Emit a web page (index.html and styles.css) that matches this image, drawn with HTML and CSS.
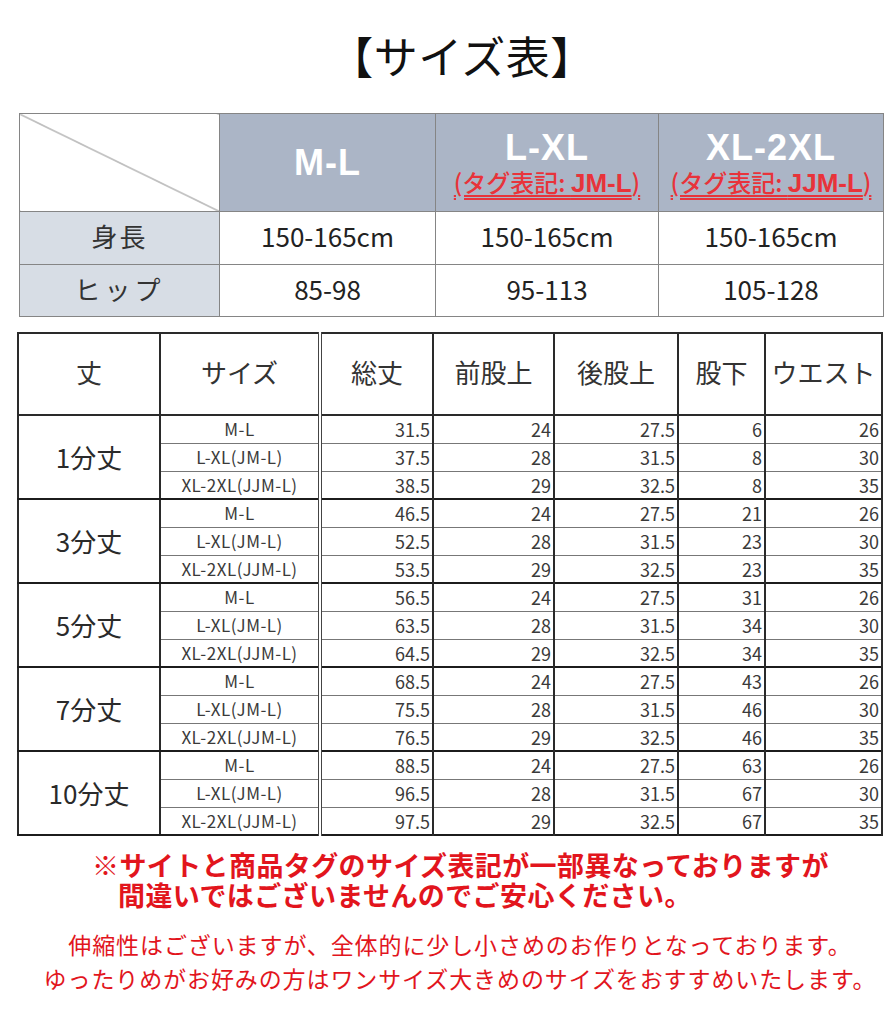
FILE: index.html
```html
<!DOCTYPE html>
<html lang="ja">
<head>
<meta charset="utf-8">
<link rel="stylesheet" href="styles.css">
</head>
<body>
<div class="page">
  <h1 class="title">【サイズ表】</h1>

  <table class="summary">
    <colgroup>
      <col class="c-label"><col class="c-a"><col class="c-b"><col class="c-c">
    </colgroup>
    <tr class="head">
      <td class="diag"></td>
      <th><span class="size-name">M-L</span></th>
      <th><span class="size-name">L-XL</span><span class="tag">(タグ表記: <b>JM-L</b>)</span></th>
      <th><span class="size-name">XL-2XL</span><span class="tag">(タグ表記: <b>JJM-L</b>)</span></th>
    </tr>
    <tr class="row-a">
      <th class="label">身長</th><td>150-165cm</td><td>150-165cm</td><td>150-165cm</td>
    </tr>
    <tr class="row-b">
      <th class="label label-wide">ヒップ</th><td>85-98</td><td>95-113</td><td>105-128</td>
    </tr>
  </table>

  <table class="detail">
    <colgroup>
      <col class="d1"><col class="d2"><col class="d3"><col class="d4"><col class="d5"><col class="d6"><col class="d7">
    </colgroup>
    <tr class="dhead">
      <th>丈</th><th class="sz-col">サイズ</th><th>総丈</th><th>前股上</th><th>後股上</th><th>股下</th><th>ウエスト</th>
    </tr>

    <tr class="gfirst"><td rowspan="3" class="len">1分丈</td><td class="sz">M-L</td><td>31.5</td><td>24</td><td>27.5</td><td>6</td><td>26</td></tr>
    <tr><td class="sz">L-XL(JM-L)</td><td>37.5</td><td>28</td><td>31.5</td><td>8</td><td>30</td></tr>
    <tr><td class="sz">XL-2XL(JJM-L)</td><td>38.5</td><td>29</td><td>32.5</td><td>8</td><td>35</td></tr>

    <tr class="gfirst"><td rowspan="3" class="len">3分丈</td><td class="sz">M-L</td><td>46.5</td><td>24</td><td>27.5</td><td>21</td><td>26</td></tr>
    <tr><td class="sz">L-XL(JM-L)</td><td>52.5</td><td>28</td><td>31.5</td><td>23</td><td>30</td></tr>
    <tr><td class="sz">XL-2XL(JJM-L)</td><td>53.5</td><td>29</td><td>32.5</td><td>23</td><td>35</td></tr>

    <tr class="gfirst"><td rowspan="3" class="len">5分丈</td><td class="sz">M-L</td><td>56.5</td><td>24</td><td>27.5</td><td>31</td><td>26</td></tr>
    <tr><td class="sz">L-XL(JM-L)</td><td>63.5</td><td>28</td><td>31.5</td><td>34</td><td>30</td></tr>
    <tr><td class="sz">XL-2XL(JJM-L)</td><td>64.5</td><td>29</td><td>32.5</td><td>34</td><td>35</td></tr>

    <tr class="gfirst"><td rowspan="3" class="len">7分丈</td><td class="sz">M-L</td><td>68.5</td><td>24</td><td>27.5</td><td>43</td><td>26</td></tr>
    <tr><td class="sz">L-XL(JM-L)</td><td>75.5</td><td>28</td><td>31.5</td><td>46</td><td>30</td></tr>
    <tr><td class="sz">XL-2XL(JJM-L)</td><td>76.5</td><td>29</td><td>32.5</td><td>46</td><td>35</td></tr>

    <tr class="gfirst"><td rowspan="3" class="len">10分丈</td><td class="sz">M-L</td><td>88.5</td><td>24</td><td>27.5</td><td>63</td><td>26</td></tr>
    <tr><td class="sz">L-XL(JM-L)</td><td>96.5</td><td>28</td><td>31.5</td><td>67</td><td>30</td></tr>
    <tr><td class="sz">XL-2XL(JJM-L)</td><td>97.5</td><td>29</td><td>32.5</td><td>67</td><td>35</td></tr>
  </table>

  <div class="notice-strong">
    <p>※サイトと商品タグのサイズ表記が一部異なっておりますが</p>
    <p class="indent">間違いではございませんのでご安心ください。</p>
  </div>
  <div class="notice">
    <p>伸縮性はございますが、全体的に少し小さめのお作りとなっております。</p>
    <p>ゆったりめがお好みの方はワンサイズ大きめのサイズをおすすめいたします。</p>
  </div>
</div>
</body>
</html>
```

FILE: styles.css
```css
html, body {
  margin: 0;
  padding: 0;
  background: #ffffff;
}

body {
  font-family: "Noto Sans CJK JP", "Liberation Sans", sans-serif;
  color: #2a2a2a;
}

.page {
  width: 896px;
  height: 1024px;
  overflow: hidden;
  display: flex;
  flex-direction: column;
  align-items: flex-start;
}

.title {
  align-self: center;
  margin: 30px 0 32px 28px;
  font-size: 44px;
  line-height: 51px;
  font-weight: 400;
  color: #111;
  letter-spacing: 0.5px;
}

/* ---------- summary table ---------- */
.summary {
  margin-left: 19px;
  border-collapse: collapse;
  table-layout: fixed;
  width: 864px;
}
.summary .c-label { width: 200px; }
.summary .c-a { width: 216px; }
.summary .c-b { width: 223px; }
.summary .c-c { width: 225px; }

.summary td,
.summary th {
  border: 1px solid #858585;
  padding: 0;
  text-align: center;
  vertical-align: middle;
}

.summary .head th,
.summary .head td {
  height: 97px;
}
.summary .head th {
  background: #abb5c6;
  color: #ffffff;
  font-family: "Liberation Sans", "Noto Sans CJK JP", sans-serif;
  font-weight: 700;
}
.summary .diag {
  background: linear-gradient(to top right, transparent calc(50% - 0.8px), #777 50%, transparent calc(50% + 0.8px));
}
.summary .size-name {
  display: block;
  font-size: 36px;
  line-height: 38px;
  letter-spacing: 1px;
}
.summary .tag {
  display: inline-block;
  margin-top: 1px;
  font-family: "Noto Sans CJK JP", sans-serif;
  font-weight: 500;
  font-size: 24px;
  line-height: 28px;
  color: #e8333a;
  text-decoration: underline double #e8333a;
  text-underline-offset: 3px;
}
.summary .tag b {
  font-family: "Liberation Sans", sans-serif;
  font-weight: 700;
  font-size: 26px;
}

.summary .row-a td,
.summary .row-a th { height: 48px; }
.summary .row-b td,
.summary .row-b th { height: 47px; }

.summary .row-a td,
.summary .row-b td {
  font-size: 26px;
  line-height: 30px;
  padding-bottom: 4px;
  color: #222;
}
.summary .label {
  background: #d7dde5;
  font-weight: 400;
  font-size: 26px;
  line-height: 30px;
  padding-bottom: 4px;
  color: #333;
  letter-spacing: 2px;
}
.summary .label-wide {
  letter-spacing: 4px;
}

/* ---------- detail table ---------- */
.detail {
  margin: 15px 0 0 17px;
  border-collapse: collapse;
  table-layout: fixed;
  width: 864px;
  border: 2px solid #1c1c1c;
}
.detail .d1 { width: 142px; }
.detail .d2 { width: 160px; }
.detail .d3 { width: 113px; }
.detail .d4 { width: 121px; }
.detail .d5 { width: 124px; }
.detail .d6 { width: 87px; }
.detail .d7 { width: 117px; }

.detail .dhead {
  height: 82px;
}
.detail th {
  padding: 0 0 4px 0;
  border: 2px solid #2a2a2a;
  font-weight: 400;
  font-size: 26px;
  line-height: 30px;
  color: #333;
  text-align: center;
  vertical-align: middle;
}
.detail .sz-col {
  border-right: 4px double #444;
}

.detail tr {
  height: 28px;
}
.detail td {
  padding: 0 2px 0 0;
  border-left: 2px solid #2a2a2a;
  border-right: 2px solid #2a2a2a;
  border-top: 1px solid #777;
  border-bottom: 1px solid #777;
  font-size: 18px;
  line-height: 20px;
  color: #3a3a3a;
  text-align: right;
  vertical-align: middle;
}
.detail tr.gfirst td {
  border-top: 2px solid #1c1c1c;
}
.detail td.len {
  border-bottom: 2px solid #1c1c1c;
  text-align: center;
  padding: 0;
  font-size: 26px;
  line-height: 30px;
  color: #2a2a2a;
}
.detail td.sz {
  text-align: center;
  padding: 0;
  font-size: 17px;
  border-right: 4px double #444;
  letter-spacing: 0.5px;
}

/* ---------- notices ---------- */
.notice-strong {
  margin: 14px 0 0 92px;
  color: #e2151d;
  font-weight: 700;
  font-size: 27px;
  line-height: 30px;
  letter-spacing: 0.4px;
}
.notice-strong p,
.notice p {
  margin: 0;
}
.notice-strong .indent {
  padding-left: 26px;
}

.notice {
  align-self: center;
  margin: 17px 0 0 24px;
  color: #e2151d;
  font-size: 23px;
  line-height: 34px;
  letter-spacing: 0.9px;
  text-align: center;
}
```
